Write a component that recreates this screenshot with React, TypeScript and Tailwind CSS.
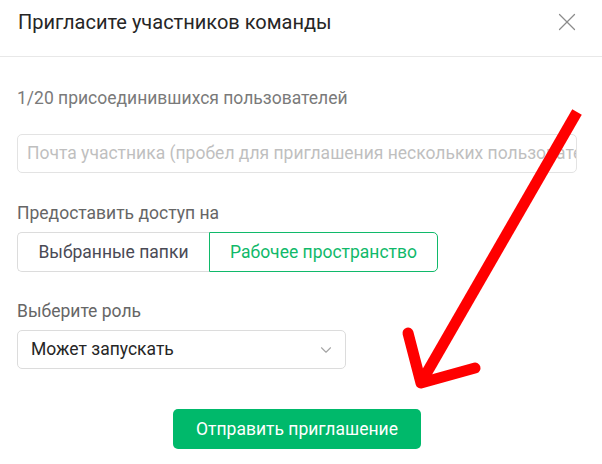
import { X, ChevronDown } from "lucide-react";

function InviteModal() {
  return (
    <div className="relative w-[602px] h-[464px] bg-white overflow-hidden font-['Roboto',sans-serif]">
      {/* header */}
      <div className="h-[57px] border-b border-[#e8e8e8]">
        <div className="flex justify-between items-center h-[44px] pl-[18px] pr-[20px]">
          <div className="text-[20px] leading-[24px] text-[#262626]">Пригласите участников команды</div>
          <X size={30} strokeWidth={1} color="#8c8c8c" />
        </div>
      </div>

      {/* body */}
      <div className="flex flex-col px-[17px]">
        <div className="mt-[28px] text-[17.5px] leading-[26px] text-[#7a7a7a]">1/20 присоединившихся пользователей</div>

        <div className="mt-[23px] h-[39px] w-[560px] flex items-center border border-[#e3e3e3] rounded-[5px] pl-[9px] overflow-hidden">
          <input
            className="w-full outline-none text-[17.5px] text-[#333] placeholder:text-[#bfbfbf] bg-transparent"
            placeholder="Почта участника (пробел для приглашения нескольких пользователей)"
          />
        </div>

        <div className="mt-[27px] text-[17.5px] leading-[26px] text-[#666666]">Предоставить доступ на</div>
        <div className="mt-[6px] flex">
          <button className="h-[40px] w-[192px] border border-[#dcdcdc] border-r-0 rounded-l-[5px] text-[17.5px] text-[#4a4a55]">
            Выбранные папки
          </button>
          <button className="h-[40px] w-[229px] border border-[#10b96a] rounded-r-[5px] text-[17.5px] text-[#10b96a]">
            Рабочее пространство
          </button>
        </div>

        <div className="mt-[26px] text-[17.5px] leading-[26px] text-[#666666]">Выберите роль</div>
        <div className="mt-[6px] h-[39px] w-[329px] flex items-center justify-between border border-[#dcdcdc] rounded-[5px] pl-[13px] pr-[10px]">
          <span className="text-[17.5px] text-[#262626]">Может запускать</span>
          <ChevronDown size={18} strokeWidth={1.5} color="#a6a6a6" />
        </div>

        <div className="mt-[40px] ml-[156px]">
          <button className="h-[40px] w-[248px] bg-[#00b96b] rounded-[5px] text-white text-[17.5px]">
            Отправить приглашение
          </button>
        </div>
      </div>

      {/* red annotation arrow */}
      <svg className="absolute inset-0 pointer-events-none" width="602" height="464" viewBox="0 0 602 464">
        <line x1="577" y1="112" x2="422" y2="381" stroke="#ff0000" strokeWidth="11" strokeLinecap="butt" />
        <polyline
          points="408,333 421,383 475,368"
          fill="none"
          stroke="#ff0000"
          strokeWidth="11"
          strokeLinecap="round"
          strokeLinejoin="round"
        />
      </svg>
    </div>
  );
}

export default function App() {
  return <InviteModal />;
}
